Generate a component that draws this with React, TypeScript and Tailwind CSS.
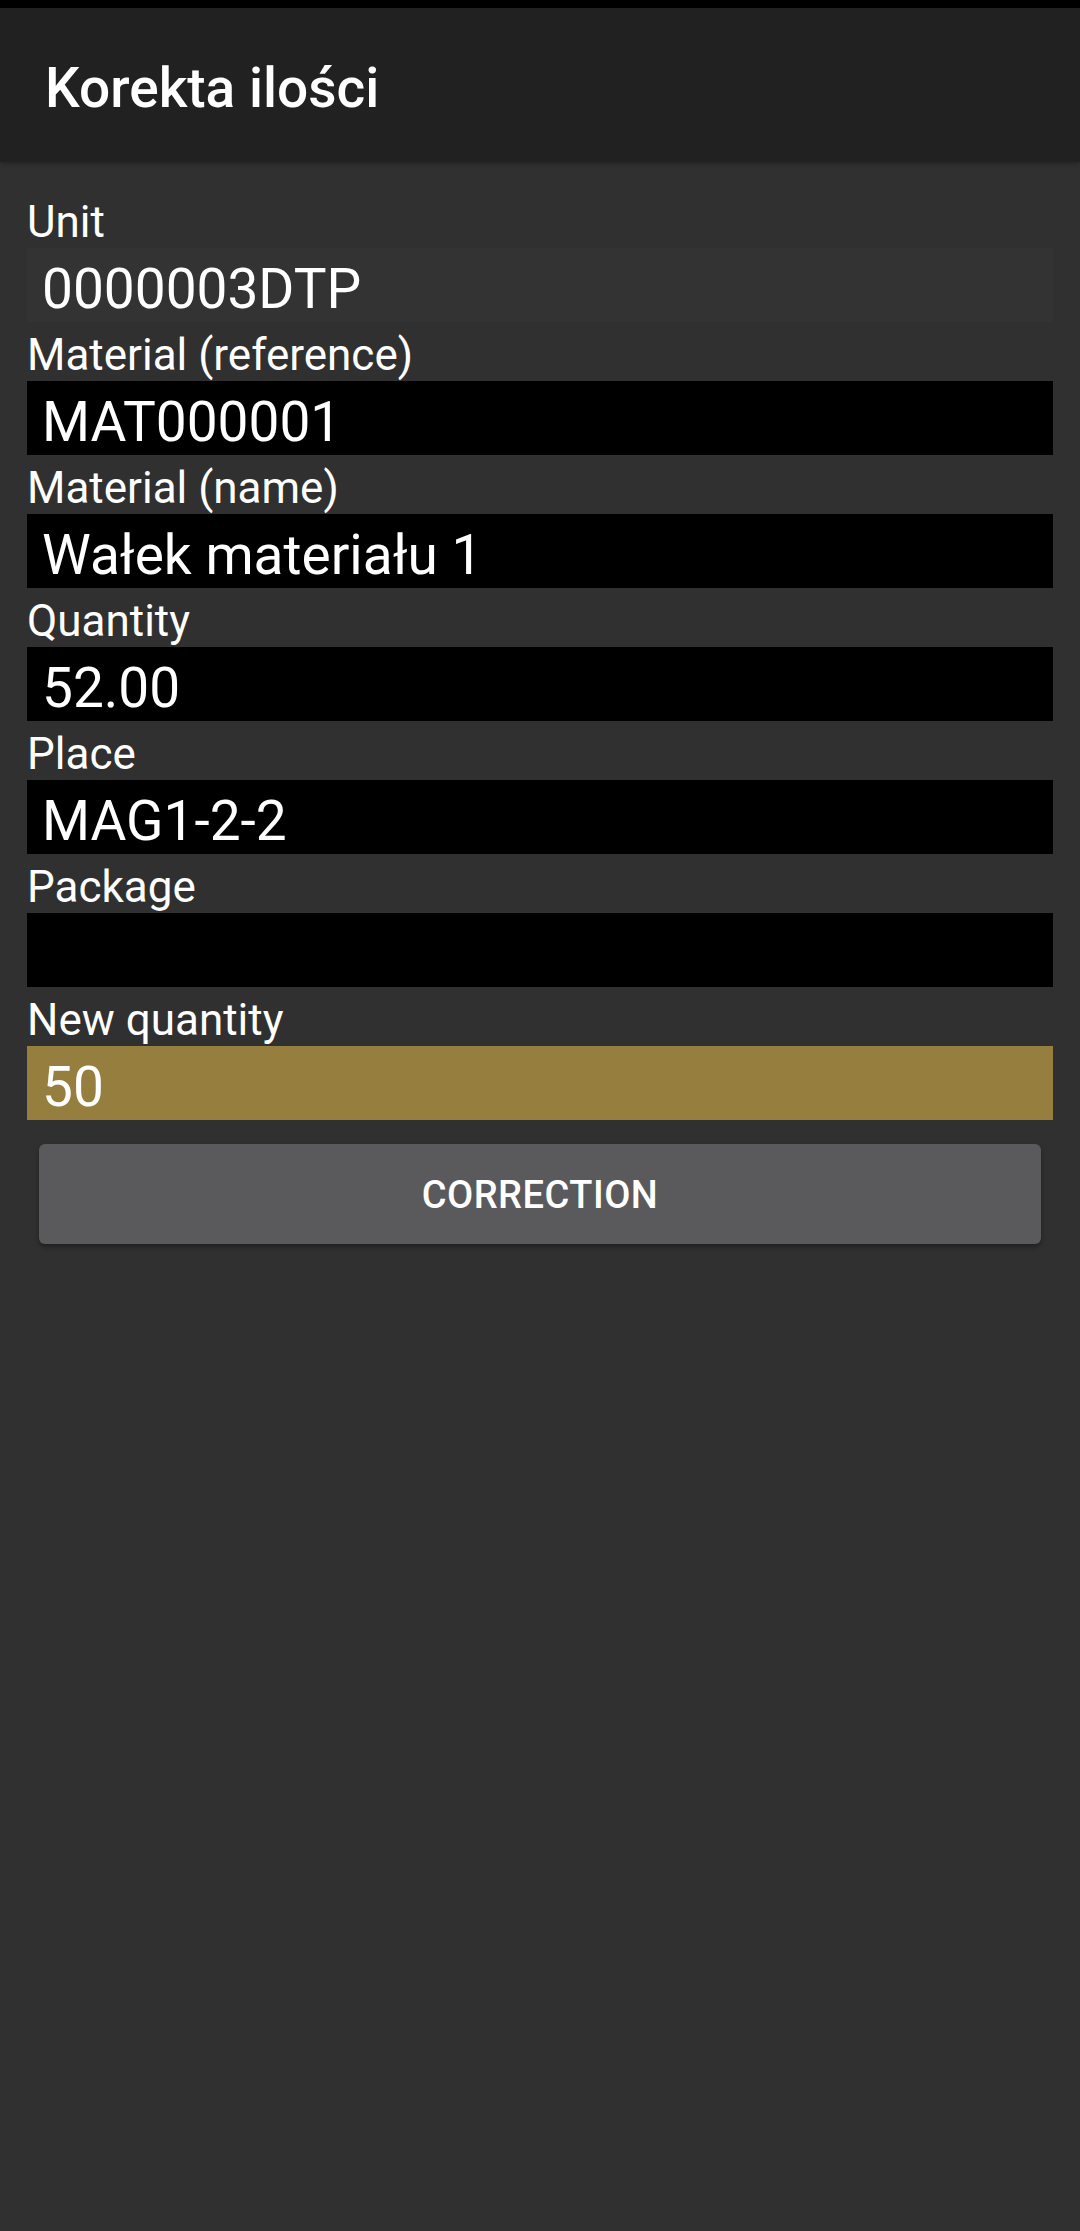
const fields: { label: string; value: string; kind: 'readonly' | 'input' | 'active' }[] = [
  { label: 'Unit', value: '0000003DTP', kind: 'readonly' },
  { label: 'Material (reference)', value: 'MAT000001', kind: 'input' },
  { label: 'Material (name)', value: 'Wałek materiału 1', kind: 'input' },
  { label: 'Quantity', value: '52.00', kind: 'input' },
  { label: 'Place', value: 'MAG1-2-2', kind: 'input' },
  { label: 'Package', value: '', kind: 'input' },
  { label: 'New quantity', value: '50', kind: 'active' },
];

const fieldBg = {
  readonly: 'bg-[#333333]',
  input: 'bg-black',
  active: 'bg-[#967f3e]',
};

export default function App() {
  return (
    <div className="flex min-h-[2231px] w-[1080px] flex-col bg-[#303030] font-['Roboto','Liberation_Sans',sans-serif] text-white">
      {/* status bar + toolbar */}
      <div className="h-[8px] bg-black" />
      <header className="flex h-[154px] items-center bg-[#212121] px-[45px] shadow-[0_2px_4px_rgba(0,0,0,0.25)]">
        <h1 className="pt-[6px] text-[55px] font-medium leading-none">Korekta ilości</h1>
      </header>

      <main className="flex flex-col px-[27px] pt-[27px]">
        {fields.map((f) => (
          <div key={f.label} className="flex flex-col">
            <label className="h-[59px] pt-[7px] text-[44px] leading-[52px]">{f.label}</label>
            <div className={`flex h-[74px] items-center px-[15px] pt-[8px] text-[55px] leading-none ${fieldBg[f.kind]}`}>
              {f.value}
            </div>
          </div>
        ))}

        <div className="px-[12px] pt-[24px]">
          <button
            type="button"
            className="flex h-[100px] w-full items-center justify-center rounded-[6px] bg-[#5a5a5c] pt-[2px] text-[38px] font-medium tracking-[0.5px] shadow-[0_3px_5px_rgba(0,0,0,0.35)]"
          >
            CORRECTION
          </button>
        </div>
      </main>
    </div>
  );
}
